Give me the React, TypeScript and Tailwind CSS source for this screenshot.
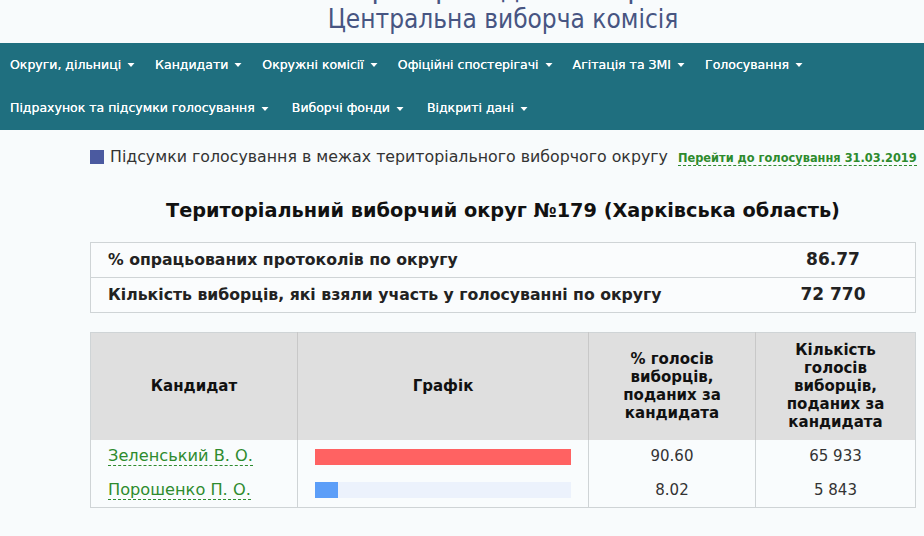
import React from "react";

const Caret = () => (
  <svg width="8" height="6" viewBox="0 0 8 6" className="ml-[6px] inline-block">
    <path d="M0.5 1 L7.5 1 L4 5 Z" fill="white" />
  </svg>
);

const NavItem = ({ label }: { label: string }) => (
  <span className="flex items-center whitespace-nowrap text-white text-[12.5px] [text-shadow:0_0_0.5px_white]">
    {label}
    <Caret />
  </span>
);

export default function App() {
  const row1 = ["Округи, дільниці", "Кандидати", "Окружні комісії", "Офіційні спостерігачі", "Агітація та ЗМІ", "Голосування"];
  const row2 = ["Підрахунок та підсумки голосування", "Виборчі фонди", "Відкриті дані"];
  const candidates = [
    { name: "Зеленський В. О.", pct: 90.6, pctStr: "90.60", votes: "65 933", color: "bg-[#ff6262]" },
    { name: "Порошенко П. О.", pct: 8.02, pctStr: "8.02", votes: "5 843", color: "bg-[#5c9ef8]" },
  ];
  const max = Math.max(...candidates.map((c) => c.pct));
  return (
    <div className="min-h-[536px] w-[924px] overflow-hidden bg-[#f8fbfc] font-['DejaVu_Sans',Verdana,sans-serif] text-[#222]">
      <header className="h-[43px] overflow-hidden pl-[82px] text-center text-[#475582] font-['DejaVu_Sans_Condensed','Liberation_Sans_Narrow','Roboto_Condensed',sans-serif]">
        <div className="h-[4px] overflow-hidden">
          <div className="mt-[-27px] text-[30px] leading-[30px]">Вибори Президента України</div>
        </div>
        <div className="text-[26px] leading-[30px]">Центральна виборча комісія</div>
      </header>
      <nav className="bg-[#1f6f7f] h-[87px] pl-[10px]">
        <div className="flex h-[44px] items-center gap-[20px]">
          {row1.map((l) => (
            <NavItem key={l} label={l} />
          ))}
        </div>
        <div className="flex h-[43px] items-center gap-[23px]">
          {row2.map((l) => (
            <NavItem key={l} label={l} />
          ))}
        </div>
      </nav>
      <main className="ml-[90px] w-[826px]">
        <div className="mt-[17px] flex items-center whitespace-nowrap">
          <span className="h-[14px] w-[14px] shrink-0 bg-[#4b5aa0]" />
          <span className="ml-[6px] shrink-0 text-[15.8px] leading-[20px] text-[#333]">
            Підсумки голосування в межах територіального виборчого округу
          </span>
          <a className="ml-[10px] mt-[3px] shrink-0 text-[11.4px] font-bold text-[#2e8b2e] border-b border-dashed border-[#2e8b2e] leading-[14px]">
            Перейти до голосування 31.03.2019
          </a>
        </div>
        <h1 className="mt-[33px] text-center text-[19.3px] font-bold text-[#111] leading-[22px]">
          Територіальний виборчий округ №179 (Харківська область)
        </h1>
        <div className="mt-[20px] border border-[#cfd4d6] bg-[#fafcfd]">
          <div className="flex h-[35px] items-center border-b border-[#cfd4d6] text-[15.7px] font-bold">
            <div className="flex-1 pl-[17px]">% опрацьованих протоколів по округу</div>
            <div className="w-[164px] text-center text-[17px]">86.77</div>
          </div>
          <div className="flex h-[34px] items-center text-[15.7px] font-bold">
            <div className="flex-1 pl-[17px]">Кількість виборців, які взяли участь у голосуванні по округу</div>
            <div className="w-[164px] text-center text-[17px]">72 770</div>
          </div>
        </div>
        <table className="mt-[19px] w-[826px] border-collapse border border-[#cfd4d6]">
          <thead>
            <tr className="h-[107px] bg-[#dfdfdf] text-[15px] font-bold leading-[18px] text-[#111]">
              <th className="w-[207px] border-r border-[#c8c8c8]">Кандидат</th>
              <th className="w-[287px] border-r border-[#c8c8c8]">Графік</th>
              <th className="w-[167px] border-r border-[#c8c8c8] px-[14px]">
                % голосів виборців, поданих за кандидата
              </th>
              <th className="px-[14px]">Кількість голосів виборців, поданих за кандидата</th>
            </tr>
          </thead>
          <tbody className="bg-[#f9fcfd]">
            {candidates.map((c) => (
              <tr key={c.name} className="h-[34px] text-[15px]">
                <td className="border-r border-[#cfd4d6] pl-[17px] text-[16.2px]">
                  <a className="text-[#2e8b2e] border-b border-dashed border-[#2e8b2e] leading-[17px]">{c.name}</a>
                </td>
                <td className="border-r border-[#cfd4d6] px-[17px]">
                  <div className="h-[16px] w-[256px] bg-[#ecf2fc]">
                    <div className={`h-full ${c.color}`} style={{ width: `${(c.pct / max) * 100}%` }} />
                  </div>
                </td>
                <td className="border-r border-[#cfd4d6] text-center text-[#333]">{c.pctStr}</td>
                <td className="text-center text-[#333]">{c.votes}</td>
              </tr>
            ))}
          </tbody>
        </table>
      </main>
    </div>
  );
}
